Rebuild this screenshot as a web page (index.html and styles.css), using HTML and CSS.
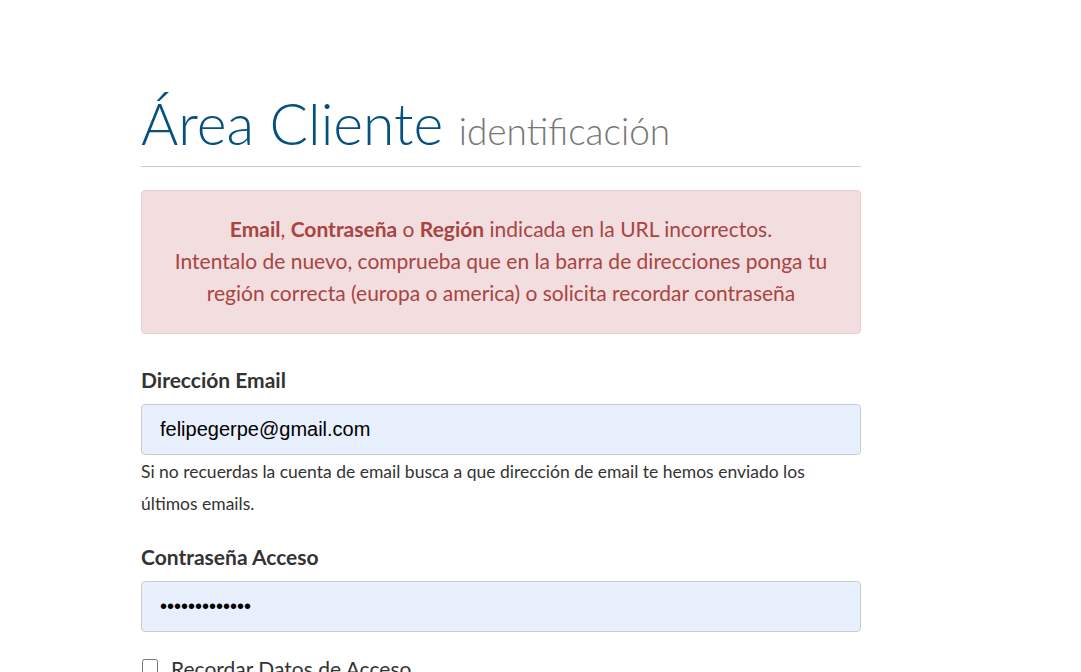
FILE: index.html
```html
<!DOCTYPE html>
<html>
<head>
    <title>Área Cliente</title>
    <link rel="stylesheet" href="styles.css">
</head>
<body>
    <div class="container">
        <h1 class="page-title">Área Cliente <small>identificación</small></h1>
        <div class="alert">
            <b>Email</b>, <b>Contraseña</b> o <b>Región</b> indicada en la URL incorrectos.<br>
            Intentalo de nuevo, comprueba que en la barra de direcciones ponga tu región correcta (europa o america) o solicita recordar contraseña
        </div>
        <form class="login">
            <div class="group">
                <label for="email">Dirección Email</label>
                <input type="text" id="email" class="field" value="felipegerpe@gmail.com">
                <p class="help">Si no recuerdas la cuenta de email busca a que dirección de email te hemos enviado los últimos emails.</p>
            </div>
            <div class="group">
                <label for="pass">Contraseña Acceso</label>
                <input type="password" id="pass" class="field" value="felipegerpe1x">
            </div>
            <div class="check">
                <input type="checkbox" id="remember">
                <label for="remember">Recordar Datos de Acceso</label>
            </div>
        </form>
    </div>
</body>
</html>
```

FILE: styles.css
```css
body {
    margin: 0;
    font-family: Lato, "Open Sans", sans-serif;
    color: #333;
    background: #fff;
}

.container {
    width: 720px;
    margin-left: 141px;
    padding-top: 91px;
}

.page-title {
    margin: 0 0 23px;
    padding-bottom: 3px;
    border-bottom: 1px solid #ccc;
    font-weight: 300;
    font-size: 57px;
    line-height: 64px;
    color: #05507f;
}

.page-title small {
    font-size: 37px;
    color: #777;
}

.alert {
    background: #f2dede;
    border: 1px solid #ebccd1;
    border-radius: 4px;
    color: #a94442;
    text-align: center;
    font-size: 21px;
    line-height: 32px;
    padding: 22px 20px 24px;
    margin-bottom: 33px;
}

.group {
    margin-bottom: 24px;
}

.group label {
    display: block;
    font-weight: bold;
    font-size: 21px;
    line-height: 26px;
    margin-bottom: 11px;
}

.field {
    display: block;
    box-sizing: border-box;
    width: 100%;
    height: 51px;
    padding: 0 18px;
    border: 1px solid #ccc;
    border-radius: 4px;
    background: #e8f0fe;
    font-family: Arial, "Liberation Sans", sans-serif;
    font-size: 20px;
    color: #000;
}

.help {
    margin: 1px 0 0;
    font-size: 17.5px;
    line-height: 32px;
}

.check {
    display: flex;
    align-items: flex-start;
    gap: 13px;
    margin-top: 3px;
    font-size: 21px;
    line-height: 26px;
}

.check input {
    width: 16px;
    height: 16px;
    margin: 3px 0 0 1px;
}
```
